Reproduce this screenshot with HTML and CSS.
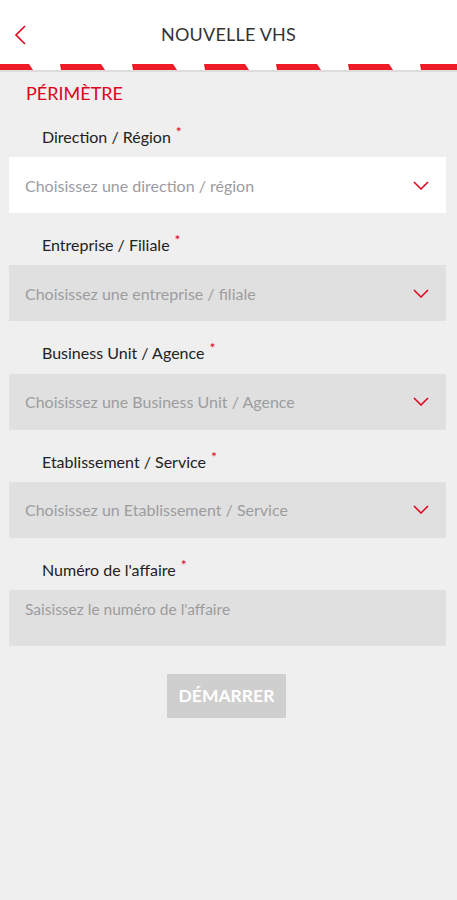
FILE: index.html
```html
<!DOCTYPE html>
<html lang="fr">
<head>
<meta charset="utf-8">
<title>Nouvelle VHS</title>
<link rel="stylesheet" href="styles.css">
</head>
<body>
<header class="topbar">
  <button class="back" aria-label="Retour">
    <svg width="12" height="20" viewBox="0 0 12 20"><path d="M11 1 L2 10 L11 19" fill="none" stroke="#e2001a" stroke-width="1.6"/></svg>
  </button>
  <h1 class="title">NOUVELLE VHS</h1>
</header>
<div class="stripe">
  <svg width="457" height="6" viewBox="0 0 457 6" preserveAspectRatio="none">
    <defs>
      <pattern id="dash" x="-12" y="0" width="72" height="6" patternUnits="userSpaceOnUse">
        <polygon points="0,0 41,0 45,6 1,6" fill="#ee1c25"/>
      </pattern>
    </defs>
    <rect x="0" y="0" width="457" height="6" fill="url(#dash)"/>
  </svg>
</div>
<main class="content">
  <h2 class="section">PÉRIMÈTRE</h2>

  <div class="field">
    <label class="label">Direction / Région<span class="req">*</span></label>
    <div class="select active">
      <span class="ph">Choisissez une direction / région</span>
      <svg class="chev" width="16" height="9" viewBox="0 0 16 9"><path d="M1 1 L8 8 L15 1" fill="none" stroke="#e2001a" stroke-width="1.5"/></svg>
    </div>
  </div>

  <div class="field">
    <label class="label">Entreprise / Filiale<span class="req">*</span></label>
    <div class="select">
      <span class="ph">Choisissez une entreprise / filiale</span>
      <svg class="chev" width="16" height="9" viewBox="0 0 16 9"><path d="M1 1 L8 8 L15 1" fill="none" stroke="#e2001a" stroke-width="1.5"/></svg>
    </div>
  </div>

  <div class="field">
    <label class="label">Business Unit / Agence<span class="req">*</span></label>
    <div class="select">
      <span class="ph">Choisissez une Business Unit / Agence</span>
      <svg class="chev" width="16" height="9" viewBox="0 0 16 9"><path d="M1 1 L8 8 L15 1" fill="none" stroke="#e2001a" stroke-width="1.5"/></svg>
    </div>
  </div>

  <div class="field">
    <label class="label">Etablissement / Service<span class="req">*</span></label>
    <div class="select">
      <span class="ph">Choisissez un Etablissement / Service</span>
      <svg class="chev" width="16" height="9" viewBox="0 0 16 9"><path d="M1 1 L8 8 L15 1" fill="none" stroke="#e2001a" stroke-width="1.5"/></svg>
    </div>
  </div>

  <div class="field">
    <label class="label">Numéro de l'affaire<span class="req">*</span></label>
    <div class="input">
      <span class="ph">Saisissez le numéro de l'affaire</span>
    </div>
  </div>

  <div class="actions">
    <button class="start">DÉMARRER</button>
  </div>
</main>
</body>
</html>
```
FILE: styles.css
```css
* { box-sizing: border-box; }
html, body { margin: 0; padding: 0; }
body {
  background: #efefef;
  font-family: Lato, "Noto Sans", sans-serif;
  width: 457px;
  min-height: 900px;
}
.topbar {
  background: #fff;
  height: 64px;
  display: flex;
  align-items: center;
  justify-content: center;
  position: relative;
}
.back {
  position: absolute;
  left: 13px;
  top: 25px;
  border: 0;
  background: none;
  padding: 0;
  width: 14px;
  height: 22px;
}
.title {
  margin: 0;
  font-size: 18px;
  font-weight: 400;
  color: #333;
  letter-spacing: 0.2px;
  padding-top: 4px;
}
.stripe {
  background: #fff;
  height: 8px;
  border-bottom: 2px solid #dcdcdc;
  line-height: 0;
}
.stripe svg { display: block; }
.content {
  padding: 10px 11px 0 9px;
}
.section {
  margin: 0 0 0 17px;
  color: #e2001a;
  font-size: 18px;
  font-weight: 400;
  line-height: 23px;
}
.field {
  display: flex;
  flex-direction: column;
}
.label {
  margin: 17px 0 0 33px;
  font-size: 16px;
  color: #222;
  line-height: 20px;
  height: 35.2px;
}
.req {
  color: #e2001a;
  font-size: 14px;
  vertical-align: 6px;
  margin-left: 5px;
}
.select, .input {
  height: 56px;
  background: #e0e0e0;
  display: flex;
  align-items: center;
  justify-content: space-between;
  padding: 0 17px 0 16px;
}
.select.active { background: #fff; }
.input { align-items: flex-start; padding-top: 10px; }
.ph {
  color: #9c9c9f;
  font-size: 16px;
}
.input .ph { font-size: 15.5px; }
.chev { display: block; }
.actions {
  display: flex;
  justify-content: center;
  padding-top: 28px;
}
.start {
  border: 0;
  background: #cfcfcf;
  color: #fff;
  font-family: Lato, "Noto Sans", sans-serif;
  font-weight: 700;
  font-size: 17.5px;
  width: 119px;
  height: 44px;
  padding: 0;
  margin-left: -2px;
}
```
